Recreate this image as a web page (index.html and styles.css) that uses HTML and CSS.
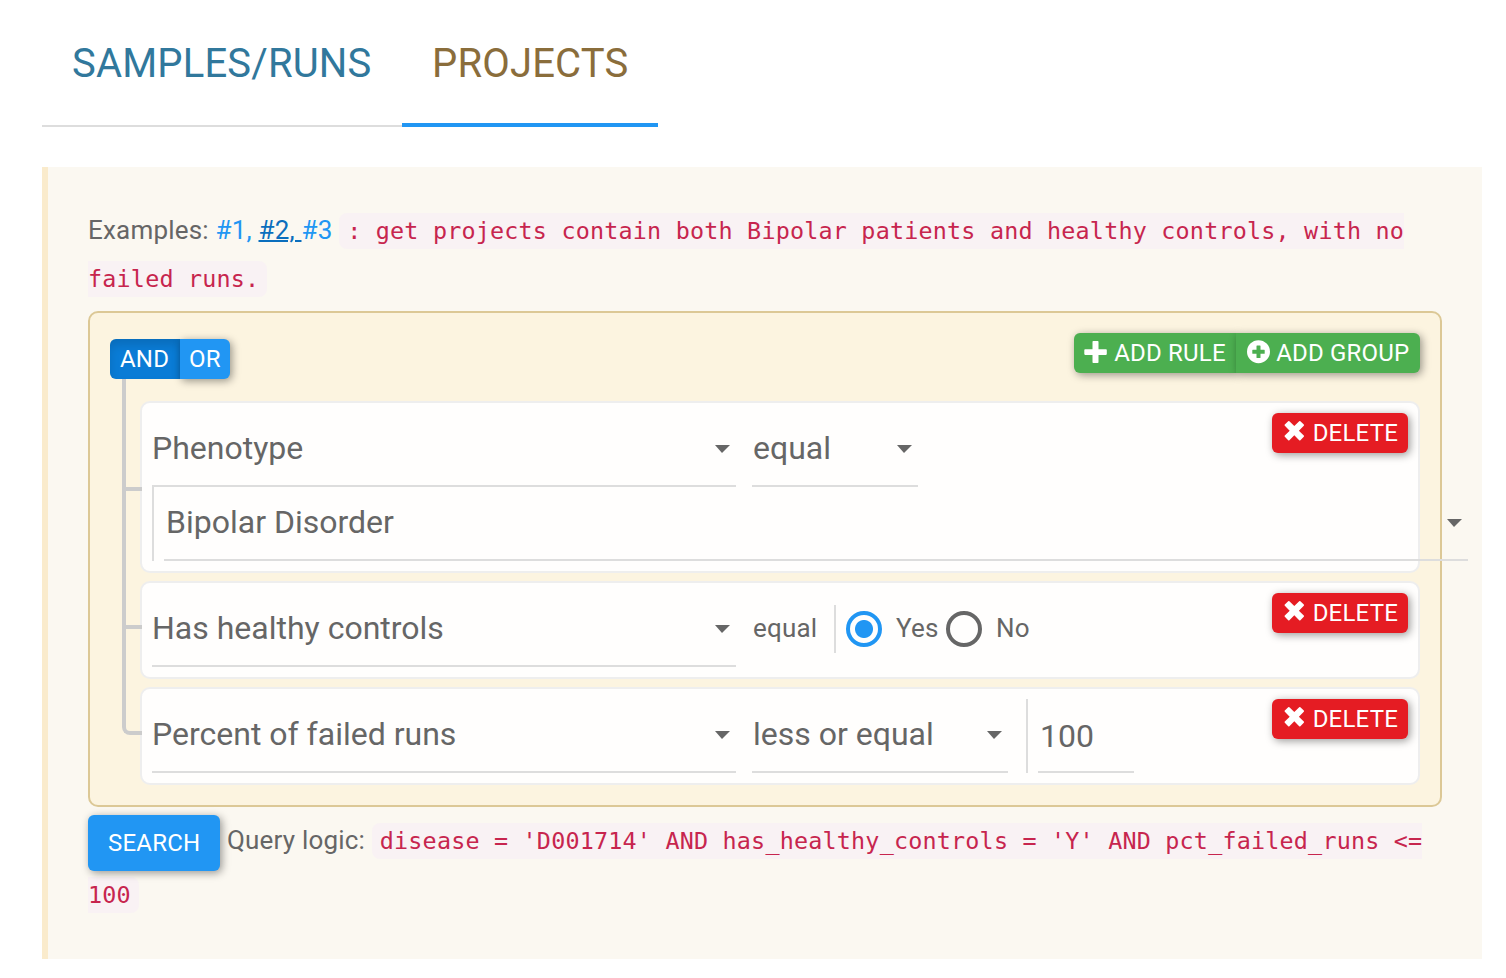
FILE: index.html
```html
<!DOCTYPE html>
<html lang="en">
<head>
<meta charset="utf-8">
<title>Projects query</title>
<link rel="stylesheet" href="styles.css">
</head>
<body>
<svg class="defs" width="0" height="0" aria-hidden="true">
  <symbol id="plus" viewBox="0 0 24 24"><path d="M9.3 1h4.4q.8 0 .8.8v7.5H22q.8 0 .8.8v4q0 .8-.8.8h-7.5v7.3q0 .8-.8.8H9.300q-.8 0-.8-.8v-7.300H1.100q-.8 0-.8-.8v-4q0-.8.8-.8h7.400V1.800q0-.8.8-.8z"/></symbol>
  <symbol id="plus-circle" viewBox="0 0 24 24"><path fill-rule="evenodd" d="M12.500.2a11.500 11.500 0 1 1 0 23a11.500 11.500 0 1 1 0-23zM11 5.500q-.5 0-.5.500v3.700H6.800q-.5 0-.5.500v3q0 .5.5.5h3.700v3.700q0 .5.5.5h3q.5 0 .5-.5v-3.700h3.700q.5 0 .5-.5v-3q0-.5-.5-.5h-3.700V6q0-.5-.5-.5z"/></symbol>
  <symbol id="remove" viewBox="0 0 24 24"><path d="M6.200 1.200q.6-.6 1.200 0l4.900 4.900 4.900-4.900q.6-.6 1.200 0l3.400 3.400q.6.6 0 1.200l-4.900 4.900 4.900 4.900q.6.600 0 1.200l-3.400 3.400q-.6.6-1.200 0l-4.900-4.900-4.900 4.900q-.6.6-1.200 0l-3.400-3.400q-.6-.6 0-1.200l4.900-4.900-4.900-4.900q-.6-.6 0-1.200z"/></symbol>
</svg>
<nav class="tabs">
  <a class="tab">SAMPLES/RUNS</a>
  <a class="tab tab-active">PROJECTS</a>
</nav>
<main class="panel">
  <p class="line">Examples: <a class="link">#1, </a><a class="link link-hover">#2, </a><a class="link">#3</a> <code>: get projects contain both Bipolar patients and healthy controls, with no failed runs.</code></p>
  <section class="builder">
    <header class="builder-head">
      <div class="group conditions"><span class="btn blue pressed">AND</span><span class="btn blue or">OR</span></div>
      <div class="group"><span class="btn green add-rule"><svg class="icon"><use href="#plus"/></svg> ADD RULE</span><span class="btn green add-group"><svg class="icon"><use href="#plus-circle"/></svg> ADD GROUP</span></div>
    </header>
    <div class="rules">
      <div class="rule">
        <div class="fields">
          <div class="select filter">Phenotype</div>
          <div class="select operator">equal</div>
          <div class="value value-wide"><div class="select select-wide">Bipolar Disorder</div></div>
        </div>
        <span class="btn red"><svg class="icon"><use href="#remove"/></svg> DELETE</span>
      </div>
      <div class="rule">
        <div class="fields">
          <div class="select filter">Has healthy controls</div>
          <div class="fixed">equal</div>
          <div class="value radios">
            <span class="radio checked"></span><span class="radio-label">Yes</span>
            <span class="radio"></span><span class="radio-label">No</span>
          </div>
        </div>
        <span class="btn red"><svg class="icon"><use href="#remove"/></svg> DELETE</span>
      </div>
      <div class="rule">
        <div class="fields">
          <div class="select filter">Percent of failed runs</div>
          <div class="select operator-long">less or equal</div>
          <div class="value"><div class="number">100</div></div>
        </div>
        <span class="btn red"><svg class="icon"><use href="#remove"/></svg> DELETE</span>
      </div>
    </div>
  </section>
  <p class="line"><span class="btn blue search">SEARCH</span> Query logic: <code>disease = 'D001714' AND has_healthy_controls = 'Y' AND pct_failed_runs &lt;= 100</code></p>
</main>
</body>
</html>
```
FILE: styles.css
```css
*, *::before, *::after { box-sizing: border-box; }

body {
  margin: 0;
  padding: 0 24px 0 42px;
  background: #fff;
  color: #666;
  font: 26px/48px Roboto, sans-serif;
  letter-spacing: 0.2px;
  overflow: hidden;
}

.defs { position: absolute; }

.tabs { display: flex; height: 127px; margin-bottom: 40px; }
.tab {
  width: 360px;
  padding: 34px 0 0 30px;
  font-size: 40px;
  line-height: 60px;
  letter-spacing: 0.17px;
  color: #31789c;
  white-space: nowrap;
  border-bottom: 2px solid #ddd;
}
.tab-active { width: 256px; color: #8a6d3b; border-bottom: 4px solid #2196f3; }

.panel {
  height: 792px;
  padding: 39px 40px 40px;
  background: #fbf8f1;
  border-left: 6px solid #faebcc;
}

.line { margin: 0; }
.link { color: #2196f3; }
.link-hover {
  color: #0a6ebd;
  text-decoration: underline;
  text-decoration-thickness: 2px;
  white-space: pre;
}

code {
  padding: 4px 8px;
  border-radius: 8px;
  color: #c7254e;
  background: #f9f2f4;
  font-family: "DejaVu Sans Mono", monospace;
  font-size: 23.4px;
  line-height: 1;
}

.builder {
  height: 496px;
  margin: 9px 0 7px;
  padding: 20px;
  border: 2px solid #dcc896;
  border-radius: 10px;
  background: #fcf4e0;
}
.builder-head { display: flex; justify-content: space-between; height: 68px; }
.group { display: flex; height: 40px; }
.conditions { margin-top: 6px; }

.btn {
  display: inline-block;
  height: 40px;
  padding: 0 10px;
  border-radius: 6px;
  color: #fff;
  font-size: 24px;
  line-height: 40px;
  white-space: nowrap;
  box-shadow: 2px 2px 8px rgba(0, 0, 0, 0.4);
}
.group .btn:first-child { border-radius: 6px 0 0 6px; }
.group .btn:last-child { border-radius: 0 6px 6px 0; }
.blue { background: #2196f3; }
.green { background: #4caf50; }
.red { background: #e51c23; }
.pressed { width: 70px; background: #0a7cd6; box-shadow: inset 0 6px 10px rgba(0, 0, 0, 0.125); }
.or { width: 50px; padding: 0 9px; }
.add-rule { width: 162px; }
.add-group { width: 184px; }
.search {
  position: relative;
  top: 1px;
  height: 56px;
  padding: 0 20px;
  line-height: 56px;
  vertical-align: middle;
}

.icon { width: 24px; height: 24px; fill: currentColor; vertical-align: -3px; }

.rules { display: grid; gap: 8px; padding-left: 30px; }
.rule {
  position: relative;
  display: flex;
  justify-content: space-between;
  align-items: flex-start;
  padding: 10px;
  border: 2px solid #eee;
  border-radius: 10px;
  background: #fffefd;
}
/* connector branch that joins each rule to the condition buttons */
.rule::before {
  content: "";
  position: absolute;
  left: -20px;
  top: -60px;
  bottom: 48px;
  width: 20px;
  border: solid #ccc;
  border-width: 0 0 4px 4px;
}
.rule:first-child::before { top: -24px; bottom: 80px; }
.rule:nth-child(2)::before { top: -94px; }
.rule:last-child::before { border-bottom-left-radius: 8px; }

.fields { display: flex; flex-wrap: wrap; width: 1080px; column-gap: 16px; }
.select, .number {
  height: 74px;
  border-bottom: 2px solid #ddd;
  font-size: 32px;
  line-height: 70px;
  letter-spacing: 0;
  white-space: nowrap;
}
.select { display: flex; justify-content: space-between; padding-right: 6px; }
.select::after {
  content: "";
  height: 8px;
  margin-top: 32px;
  border: solid transparent;
  border-width: 8px 8px 0 7px;
  border-top-color: #666;
}
.filter { width: 584px; }
.operator { width: 166px; padding-left: 1px; }
.operator-long { width: 256px; padding-left: 1px; }
.value { margin-left: 2px; padding-left: 10px; border-left: 2px solid #ddd; }
.value-wide { margin: -2px 0 0; padding-top: 2px; }
.select-wide { width: 1304px; padding-left: 2px; }
.number { width: 96px; padding-left: 2px; line-height: 74px; }
.fixed { width: 64px; padding-left: 1px; line-height: 71px; }
.radios { display: flex; align-items: center; height: 48px; margin-top: 12px; }
.radio { width: 36px; height: 36px; border: 4px solid #666; border-radius: 50%; }
.radio-label { width: 50px; margin-left: 14px; line-height: 46px; height: 48px; }
.checked {
  border-color: #2196f3;
  background: radial-gradient(circle, #2196f3 8.5px, transparent 9.5px);
}
```
